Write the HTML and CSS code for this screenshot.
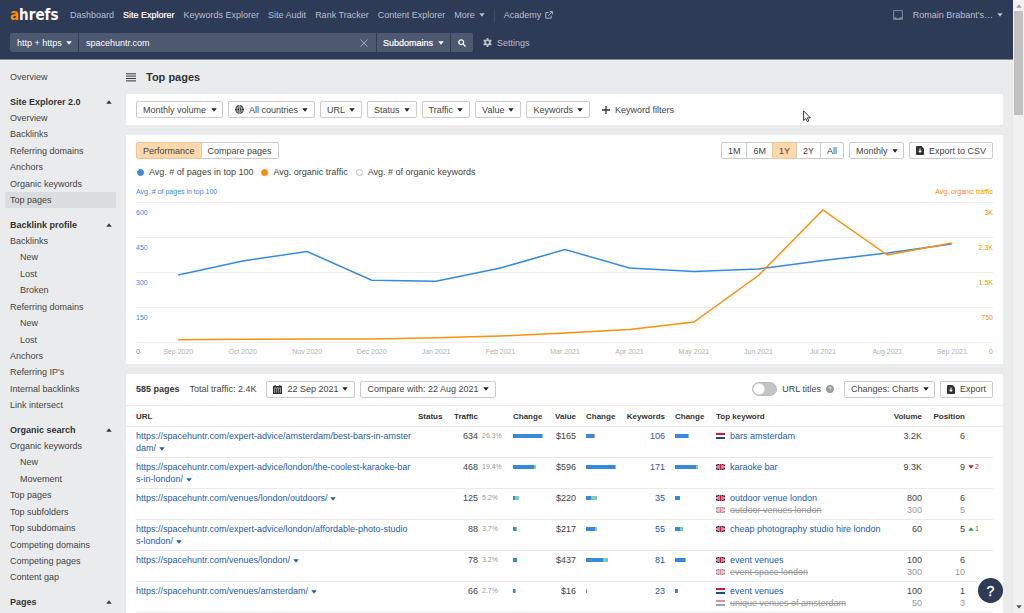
FILE: index.html
```html
<!DOCTYPE html>
<html lang="en">
<head>
<meta charset="utf-8">
<title>Top pages - Site Explorer</title>
<link rel="stylesheet" href="styles.css">
</head>
<body>
<svg class="defs" aria-hidden="true">
  <symbol id="caret" viewBox="0 0 6 4"><path d="M.3.3h5.4L3 3.8z" fill="currentColor"/></symbol>
  <symbol id="caret-up" viewBox="0 0 6 4"><path d="M.3 3.8h5.4L3 .3z" fill="currentColor"/></symbol>
  <symbol id="export" viewBox="0 0 8 9"><path d="M1 0h4.5L8 2.5V8a1 1 0 0 1-1 1H1a1 1 0 0 1-1-1V1a1 1 0 0 1 1-1z" fill="#333"/><path d="M3.5 2.6h1v2.2H6L4 7 2 4.8h1.500z" fill="#fff"/></symbol>
  <symbol id="nl" viewBox="0 0 9 6"><path fill="#fff" d="M0 0h9v6H0z"/><path fill="#c8202f" d="M0 0h9v2H0z"/><path fill="#21468b" d="M0 4h9v2H0z"/></symbol>
  <symbol id="gb" viewBox="0 0 9 6"><path fill="#0f1f6b" d="M0 0h9v6H0z"/><path d="M0 0l9 6M9 0L0 6" stroke="#fff" stroke-width=".8"/><path d="M0 0l9 6M9 0L0 6" stroke="#d0142c" stroke-width=".4"/><path d="M4.500 0v6M0 3h9" stroke="#fff" stroke-width="2"/><path d="M4.500 0v6M0 3h9" stroke="#d0142c" stroke-width="1.200"/></symbol>
</svg>

<div class="app">
<div class="page">
  <header class="header">
    <div class="topbar">
      <a class="logo" href="#"><span class="logo-a">a</span>hrefs</a>
      <nav class="mainnav" aria-label="Main">
        <a href="#">Dashboard</a>
        <a href="#" class="current">Site Explorer</a>
        <a href="#">Keywords Explorer</a>
        <a href="#">Site Audit</a>
        <a href="#">Rank Tracker</a>
        <a href="#">Content Explorer</a>
        <button type="button" class="navbtn">More <svg class="caret"><use href="#caret"/></svg></button>
        <span class="divider"></span>
        <a href="#" class="academy">Academy <svg width="8" height="8" viewBox="0 0 8 8" fill="none" stroke="currentColor" stroke-width=".9"><path d="M3.500 1.500H.8v5.700h5.400V4.500M4.600.6h2.800v2.800M7.200.8L3.200 4.800"/></svg></a>
      </nav>
      <div class="account">
        <svg width="10" height="10" viewBox="0 0 10 10"><path d="M.6.6h8.800v8.800H.6z" fill="none" stroke="#7f8899" stroke-width="1"/><path d="M.6 7.200H3.500v1h3v-1h2.900v2.200H.6z" fill="#7f8899"/></svg>
        <button type="button" class="navbtn">Romain Brabant's… <svg class="caret"><use href="#caret"/></svg></button>
      </div>
    </div>
    <form class="searchbar">
      <select class="dark protocol" aria-label="Protocol"><option>http + https</option></select>
      <div class="target">
        <input type="text" value="spacehuntr.com" aria-label="Target">
        <button type="button" class="clear" aria-label="Clear"><svg width="8" height="8" viewBox="0 0 8 8" stroke="#a0a7b3" stroke-width="1"><path d="M.5.5l7 7M7.500.5l-7 7"/></svg></button>
      </div>
      <select class="dark mode" aria-label="Mode"><option>Subdomains</option></select>
      <button type="button" class="go" aria-label="Search"><svg width="8" height="8" viewBox="0 0 8 8" fill="none" stroke="#fff" stroke-width="1.300"><circle cx="3.200" cy="3.200" r="2.400"/><path d="M5 5l2.500 2.500"/></svg></button>
      <button type="button" class="settings"><svg width="9" height="9" viewBox="0 0 10 10"><circle cx="5" cy="5" r="2.600" fill="none" stroke="currentColor" stroke-width="2"/><path d="M5 0v2M5 8v2M.7 2.500l1.700 1M7.600 6.500l1.700 1M.7 7.500l1.700-1M7.600 3.500l1.700-1" stroke="currentColor" stroke-width="2"/></svg>Settings</button>
    </form>
  </header>

  <div class="body">
    <nav class="sidebar" aria-label="Reports">
      <a href="#">Overview</a>
      <button type="button">Site Explorer 2.0 <svg class="caret"><use href="#caret-up"/></svg></button>
      <a href="#">Overview</a>
      <a href="#">Backlinks</a>
      <a href="#">Referring domains</a>
      <a href="#">Anchors</a>
      <a href="#">Organic keywords</a>
      <a href="#" class="selected">Top pages</a>
      <button type="button">Backlink profile <svg class="caret"><use href="#caret-up"/></svg></button>
      <a href="#">Backlinks</a>
      <a href="#" class="sub">New</a>
      <a href="#" class="sub">Lost</a>
      <a href="#" class="sub">Broken</a>
      <a href="#">Referring domains</a>
      <a href="#" class="sub">New</a>
      <a href="#" class="sub">Lost</a>
      <a href="#">Anchors</a>
      <a href="#">Referring IP's</a>
      <a href="#">Internal backlinks</a>
      <a href="#">Link intersect</a>
      <button type="button">Organic search <svg class="caret"><use href="#caret-up"/></svg></button>
      <a href="#">Organic keywords</a>
      <a href="#" class="sub">New</a>
      <a href="#" class="sub">Movement</a>
      <a href="#">Top pages</a>
      <a href="#">Top subfolders</a>
      <a href="#">Top subdomains</a>
      <a href="#">Competing domains</a>
      <a href="#">Competing pages</a>
      <a href="#">Content gap</a>
      <button type="button">Pages <svg class="caret"><use href="#caret-up"/></svg></button>
    </nav>

    <main class="main">
      <div class="title">
        <button type="button" class="burger" aria-label="Toggle menu"><svg width="10" height="9" viewBox="0 0 10 9" stroke="#333" stroke-width="1"><path d="M0 .8h10M0 3.100h10M0 5.500h10M0 7.900h10"/></svg></button>
        <h1>Top pages</h1>
      </div>

      <section class="panel filters" aria-label="Filters">
        <select class="btn" aria-label="Volume"><option>Monthly volume</option></select>
        <button type="button" class="btn"><svg class="icon" width="9" height="9" viewBox="0 0 9 9"><circle cx="4.500" cy="4.500" r="4.400" fill="#333"/><path d="M0 3h9M0 6h9M4.500 0v9M4.500.2C1.500 2.500 1.500 6.500 4.500 8.800M4.500.2c3 2.300 3 6.300 0 8.600" fill="none" stroke="#fff" stroke-width=".5"/></svg>All countries <svg class="caret"><use href="#caret"/></svg></button>
        <button type="button" class="btn">URL <svg class="caret"><use href="#caret"/></svg></button>
        <button type="button" class="btn">Status <svg class="caret"><use href="#caret"/></svg></button>
        <button type="button" class="btn">Traffic <svg class="caret"><use href="#caret"/></svg></button>
        <button type="button" class="btn">Value <svg class="caret"><use href="#caret"/></svg></button>
        <button type="button" class="btn">Keywords <svg class="caret"><use href="#caret"/></svg></button>
        <button type="button" class="btn plain"><svg class="icon" width="8" height="8" viewBox="0 0 8 8" stroke="#333" stroke-width="1.300"><path d="M4 0v8M0 4h8"/></svg>Keyword filters</button>
      </section>

      <section class="panel chart" aria-label="Performance chart">
        <div class="row">
          <div class="group">
            <button type="button" class="btn on">Performance</button>
            <button type="button" class="btn">Compare pages</button>
          </div>
          <div class="row-end">
            <div class="group">
              <button type="button" class="btn">1M</button>
              <button type="button" class="btn">6M</button>
              <button type="button" class="btn on">1Y</button>
              <button type="button" class="btn">2Y</button>
              <button type="button" class="btn">All</button>
            </div>
            <select class="btn" aria-label="Interval"><option>Monthly</option></select>
            <button type="button" class="btn"><svg class="icon" width="8" height="9"><use href="#export"/></svg>Export to CSV</button>
          </div>
        </div>
        <ul class="legend">
          <li><i class="dot blue"></i>Avg. # of pages in top 100</li>
          <li><i class="dot orange"></i>Avg. organic traffic</li>
          <li><i class="dot"></i>Avg. # of organic keywords</li>
        </ul>
        <div class="axis-titles"><span class="left">Avg. # of pages in top 100</span><span class="right">Avg. organic traffic</span></div>
        <div class="plot">
          <div class="tick"><span class="left">600</span><span class="right">3K</span></div>
          <div class="tick"><span class="left">450</span><span class="right">2.3K</span></div>
          <div class="tick"><span class="left">300</span><span class="right">1.5K</span></div>
          <div class="tick"><span class="left">150</span><span class="right">750</span></div>
          <svg class="lines" viewBox="0 0 13 140" preserveAspectRatio="none">
            <polyline stroke="#368ade" points=".5,73 1.500,59 2.500,49.500 3.500,78.300 4.500,79.200 5.500,66 6.500,47.500 7.500,66 8.500,69.500 9.500,67 10.500,58.500 11.500,51 12.500,42"/>
            <polyline stroke="#ff8f0f" points=".5,137.700 1.500,137.300 2.500,137 3.500,136.900 4.500,135.700 5.500,134 6.500,131 7.500,127.500 8.500,120 9.500,73.500 10.500,8 11.500,53 12.500,41"/>
          </svg>
          <div class="months">
            <span class="left">0</span>
            <ol><li>Sep 2020</li><li>Oct 2020</li><li>Nov 2020</li><li>Dec 2020</li><li>Jan 2021</li><li>Feb 2021</li><li>Mar 2021</li><li>Apr 2021</li><li>May 2021</li><li>Jun 2021</li><li>Jul 2021</li><li>Aug 2021</li><li>Sep 2021</li></ol>
            <span class="right">0</span>
          </div>
        </div>
      </section>

      <section class="panel pages" aria-label="Pages">
        <div class="row toolbar">
          <strong>585 pages</strong>
          <span>Total traffic: 2.4K</span>
          <div class="pickers">
            <button type="button" class="btn"><svg class="icon" width="9" height="9" viewBox="0 0 9 9"><path d="M0 1h1.500V0h1.200v1h3.600V0h1.200v1H9v8H0z" fill="#333"/><path d="M1.500 3.500v4.200M3.500 3.500v4.200M5.500 3.500v4.200M7.500 3.500v4.200M1 3h7" stroke="#fff" stroke-width=".5"/></svg>22 Sep 2021 <svg class="caret"><use href="#caret"/></svg></button>
            <button type="button" class="btn">Compare with: 22 Aug 2021 <svg class="caret"><use href="#caret"/></svg></button>
          </div>
          <div class="row-end">
            <label class="toggle"><input type="checkbox" role="switch">URL titles</label>
            <svg class="hint" width="8" height="8" viewBox="0 0 8 8"><circle cx="4" cy="4" r="3.900" fill="#999"/><path d="M2.800 3.200c0-1.600 2.400-1.500 2.400-.1 0 .9-1.200.8-1.200 1.700M4 5.600v.8" fill="none" stroke="#fff" stroke-width=".8"/></svg>
            <select class="btn" aria-label="Changes"><option>Changes: Charts</option></select>
            <button type="button" class="btn"><svg class="icon" width="8" height="9"><use href="#export"/></svg>Export</button>
          </div>
        </div>
        <table>
          <colgroup><col class="c-url"><col class="c-status"><col class="c-traffic"><col class="c-share"><col class="c-change1"><col class="c-value"><col class="c-change2"><col class="c-kw"><col class="c-change3"><col class="c-top"><col class="c-vol"><col class="c-pos"><col class="c-delta"></colgroup>
          <thead>
            <tr><th>URL</th><th>Status</th><th class="num">Traffic</th><td></td><th>Change</th><th class="num">Value</th><th class="pad">Change</th><th class="num">Keywords</th><th class="pad">Change</th><th>Top keyword</th><th class="num">Volume</th><th class="num">Position</th><td></td></tr>
          </thead>
          <tbody>
            <tr>
              <td><a href="#">https://spacehuntr.com/expert-advice/amsterdam/best-bars-in-amster<br>dam/ <svg class="caret"><use href="#caret"/></svg></a></td><td></td>
              <td class="num">634</td><td class="share">26.3%</td>
              <td><span class="bar"><i style="width:29px"></i><i class="up" style="width:1px"></i></span></td>
              <td class="num">$165</td>
              <td class="pad"><span class="bar"><i style="width:8px"></i><i class="down" style="width:1px"></i></span></td>
              <td class="num"><a href="#">106</a></td>
              <td class="pad"><span class="bar"><i style="width:13px"></i><i class="up" style="width:1px"></i></span></td>
              <td><div class="kw"><svg><use href="#nl"/></svg><a href="#">bars amsterdam</a></div></td>
              <td class="num">3.2K</td><td class="num">6</td><td></td>
            </tr>
            <tr>
              <td><a href="#">https://spacehuntr.com/expert-advice/london/the-coolest-karaoke-bar<br>s-in-london/ <svg class="caret"><use href="#caret"/></svg></a></td><td></td>
              <td class="num">468</td><td class="share">19.4%</td>
              <td><span class="bar"><i style="width:21px"></i><i class="up" style="width:2px"></i></span></td>
              <td class="num">$596</td>
              <td class="pad"><span class="bar"><i style="width:29px"></i><i class="up" style="width:1px"></i></span></td>
              <td class="num"><a href="#">171</a></td>
              <td class="pad"><span class="bar"><i style="width:21px"></i><i class="up" style="width:2px"></i></span></td>
              <td><div class="kw"><svg><use href="#gb"/></svg><a href="#">karaoke bar</a></div></td>
              <td class="num">9.3K</td><td class="num">9</td><td class="delta worse"><svg class="caret"><use href="#caret"/></svg>2</td>
            </tr>
            <tr>
              <td><a href="#">https://spacehuntr.com/venues/london/outdoors/ <svg class="caret"><use href="#caret"/></svg></a></td><td></td>
              <td class="num">125</td><td class="share">5.2%</td>
              <td><span class="bar"><i style="width:2px"></i><i class="up" style="width:4px"></i></span></td>
              <td class="num">$220</td>
              <td class="pad"><span class="bar"><i style="width:5px"></i><i class="up" style="width:6px"></i></span></td>
              <td class="num"><a href="#">35</a></td>
              <td class="pad"><span class="bar"><i style="width:5px"></i></span></td>
              <td><div class="kw"><svg><use href="#gb"/></svg><a href="#">outdoor venue london</a></div><div class="kw old"><svg><use href="#gb"/></svg><s>outdoor venues london</s></div></td>
              <td class="num">800<div class="old">300</div></td><td class="num">6<div class="old">5</div></td><td></td>
            </tr>
            <tr>
              <td><a href="#">https://spacehuntr.com/expert-advice/london/affordable-photo-studio<br>s-london/ <svg class="caret"><use href="#caret"/></svg></a></td><td></td>
              <td class="num">88</td><td class="share">3.7%</td>
              <td><span class="bar"><i style="width:3px"></i><i class="up" style="width:1px"></i></span></td>
              <td class="num">$217</td>
              <td class="pad"><span class="bar"><i style="width:9px"></i><i class="up" style="width:2px"></i></span></td>
              <td class="num"><a href="#">55</a></td>
              <td class="pad"><span class="bar"><i style="width:5px"></i><i class="up" style="width:3px"></i></span></td>
              <td><div class="kw"><svg><use href="#gb"/></svg><a href="#">cheap photography studio hire london</a></div></td>
              <td class="num">60</td><td class="num">5</td><td class="delta better"><svg class="caret"><use href="#caret-up"/></svg>1</td>
            </tr>
            <tr>
              <td><a href="#">https://spacehuntr.com/venues/london/ <svg class="caret"><use href="#caret"/></svg></a></td><td></td>
              <td class="num">78</td><td class="share">3.2%</td>
              <td><span class="bar"><i style="width:4px"></i></span></td>
              <td class="num">$437</td>
              <td class="pad"><span class="bar"><i style="width:17px"></i><i class="up" style="width:5px"></i></span></td>
              <td class="num"><a href="#">81</a></td>
              <td class="pad"><span class="bar"><i style="width:10px"></i><i class="up" style="width:1px"></i></span></td>
              <td><div class="kw"><svg><use href="#gb"/></svg><a href="#">event venues</a></div><div class="kw old"><svg><use href="#gb"/></svg><s>event space london</s></div></td>
              <td class="num">100<div class="old">300</div></td><td class="num">6<div class="old">10</div></td><td></td>
            </tr>
            <tr>
              <td><a href="#">https://spacehuntr.com/venues/amsterdam/ <svg class="caret"><use href="#caret"/></svg></a></td><td></td>
              <td class="num">66</td><td class="share">2.7%</td>
              <td><span class="bar"><i style="width:2px"></i><i class="up" style="width:1px"></i></span></td>
              <td class="num">$16</td>
              <td class="pad"><span class="bar"><i class="flat" style="width:1px"></i></span></td>
              <td class="num"><a href="#">23</a></td>
              <td class="pad"><span class="bar"><i style="width:3px"></i></span></td>
              <td><div class="kw"><svg><use href="#nl"/></svg><a href="#">event venues</a></div><div class="kw old"><svg><use href="#nl"/></svg><s>unique venues of amsterdam</s></div></td>
              <td class="num">100<div class="old">50</div></td><td class="num">1<div class="old">3</div></td><td></td>
            </tr>
          </tbody>
        </table>
      </section>
    </main>
  </div>
</div>
<div class="scrollbar" aria-hidden="true">
  <svg class="caret"><use href="#caret-up"/></svg>
  <div class="thumb"></div>
  <svg class="caret end"><use href="#caret"/></svg>
</div>
</div>

<button type="button" class="help" aria-label="Help">?</button>
<svg class="cursor" width="9" height="13" viewBox="0 0 9 13" aria-hidden="true"><path d="M.6.8v9.700l2.200-2 1.500 3.200 1.500-.7-1.400-3.100h3z" fill="#fff" stroke="#222" stroke-width=".9"/></svg>
</body>
</html>
```
FILE: styles.css
```css
* { box-sizing: border-box; }
body {
  margin: 0;
  height: 100vh;
  overflow: hidden;
  background: #e9ebed;
  color: #444;
  font: 9px/12px "Liberation Sans", Arial, sans-serif;
}
button, input, select { font: inherit; color: inherit; margin: 0; }
button { background: none; border: 0; padding: 0; cursor: pointer; }
a { text-decoration: none; color: inherit; }
svg { flex: none; }
.defs { position: absolute; width: 0; height: 0; }
.caret { width: 6px; height: 4px; }

.app { display: flex; height: 100vh; }
.page { flex: 1; min-width: 0; display: flex; flex-direction: column; }

/* Header */
.header { background: #2d3b56; color: #b9bfca; border-bottom: 1px solid #7d879a; padding: 0 10px 7px; }
.topbar { display: flex; align-items: center; height: 33px; padding-bottom: 3px; }
.logo {
  width: 60px;
  color: #fff;
  font: bold 15px/18px "DejaVu Sans Condensed", "DejaVu Sans", sans-serif;
}
.logo-a { color: #ff8b00; }
.mainnav { display: flex; align-items: center; gap: 9px; }
.mainnav .current { color: #fff; -webkit-text-stroke: 0.2px #fff; }
.navbtn { display: flex; align-items: center; gap: 4px; }
.divider { width: 1px; height: 13px; background: #3f4c65; }
.academy { display: flex; align-items: center; gap: 4px; }
.account { margin-left: auto; display: flex; align-items: center; gap: 10px; }
.searchbar { display: flex; gap: 1px; height: 19px; }
.dark, .target, .go { background-color: #4d5970; color: #fff; border: 0; }
.dark {
  appearance: none;
  padding: 0 16px 0 6px;
  background-image: url("data:image/svg+xml,%3Csvg xmlns='http://www.w3.org/2000/svg' viewBox='0 0 6 4'%3E%3Cpath d='M.3.3h5.4L3 3.8z' fill='%23fff'/%3E%3C/svg%3E");
  background-repeat: no-repeat;
  background-size: 6px 4px;
  background-position: right 6px center;
}
.protocol { border-radius: 2px 0 0 2px; padding-left: 7px; }
.mode { -webkit-text-stroke: 0.2px #fff; }
.target { display: flex; width: 297px; padding: 0 8px 0 7px; }
.target input { flex: 1; min-width: 0; background: none; border: 0; padding: 0; outline: 0; }
.clear, .go { display: flex; align-items: center; justify-content: center; }
.go { width: 22px; border-radius: 0 2px 2px 0; }
.settings { display: flex; align-items: center; gap: 5px; margin-left: 9px; }

/* Sidebar */
.body { flex: 1; display: flex; min-height: 0; }
.sidebar { width: 126px; flex: none; display: flex; flex-direction: column; padding: 9px 10px 3px 5px; }
.sidebar > * { flex: 1 1 0; min-height: 16px; display: flex; align-items: center; padding-left: 5px; }
.sidebar .sub { padding-left: 15px; }
.sidebar .selected { background: #d9dde0; border-radius: 2px; }
.sidebar button { justify-content: space-between; margin-top: 8px; padding-right: 4px; font-weight: bold; color: #333; }

/* Main column */
.main { flex: 1; min-width: 0; padding-right: 10px; }
.title { display: flex; align-items: center; gap: 10px; height: 34px; }
.title h1 { margin: 0; font-size: 11px; line-height: 14px; color: #333; }
.burger { display: flex; }
.panel { background: #fff; margin-bottom: 10px; padding: 7px 10px; }
.filters { display: flex; gap: 5px; }
.btn {
  display: flex;
  align-items: center;
  gap: 4px;
  height: 17px;
  padding: 0 6px;
  background-color: #fff;
  border: 1px solid #ccc;
  border-radius: 2px;
  white-space: nowrap;
}
.btn .caret { color: #222; }
.btn .icon { margin-right: 1px; }
select.btn {
  appearance: none;
  padding-right: 15px;
  background-image: url("data:image/svg+xml,%3Csvg xmlns='http://www.w3.org/2000/svg' viewBox='0 0 6 4'%3E%3Cpath d='M.3.3h5.4L3 3.8z' fill='%23222'/%3E%3C/svg%3E");
  background-repeat: no-repeat;
  background-size: 6px 4px;
  background-position: right 5px center;
}
.btn.plain { border-color: transparent; }
.group { display: flex; }
.group .btn + .btn { margin-left: -1px; }
.group .btn:not(:last-child) { border-top-right-radius: 0; border-bottom-right-radius: 0; }
.group .btn:not(:first-child) { border-top-left-radius: 0; border-bottom-left-radius: 0; }
.btn.on { background-color: #ffd8ab; border-color: #edc698; }
.row { display: flex; align-items: center; }
.row-end { margin-left: auto; display: flex; align-items: center; gap: 5px; }

/* Chart */
.chart { padding-bottom: 0; }
.legend { display: flex; gap: 7px; margin: 6px 0 0; padding: 0; list-style: none; line-height: 14px; }
.legend li { display: flex; align-items: center; gap: 4px; }
.dot { width: 7px; height: 7px; margin: 0 1px; border: 1px solid #bbb; border-radius: 50%; }
.dot.blue { background: #368ade; border-color: #368ade; }
.dot.orange { background: #ff8b00; border-color: #ff8b00; }
.left { color: #368ade; }
.right { color: #ff8b00; }
.axis-titles, .tick { display: flex; justify-content: space-between; font-size: 7px; }
.axis-titles { margin: 7px 0 4px; }
.plot { position: relative; }
.tick { height: 35px; border-top: 1px solid #eee; padding-top: 4px; }
.lines { position: absolute; top: 0; left: 10px; width: calc(100% - 19px); height: 140px; }
.lines polyline { fill: none; stroke-width: 1.5px; vector-effect: non-scaling-stroke; }
.months {
  display: grid;
  grid-template-columns: 10px 1fr 9px;
  height: 22px;
  padding-top: 3px;
  border-top: 1px solid #eee;
  font-size: 7px;
}
.months ol { display: flex; margin: 0; padding: 0; list-style: none; color: #b0b0b0; }
.months li { flex: 1; text-align: center; }
.months .right { text-align: right; }

/* Pages table */
.pages { padding: 0; margin: 0; }
.toolbar { height: 32px; padding: 0 10px 1px; gap: 10px; border-bottom: 1px solid #eee; }
.toolbar strong { color: #333; }
.pickers { display: flex; gap: 5px; }
.toggle { display: flex; align-items: center; gap: 5px; }
.toggle input {
  appearance: none;
  width: 25px;
  height: 14px;
  border: 1px solid #bbb;
  border-radius: 7px;
  background: radial-gradient(circle at 6px 6px, #fff 5px, #c4c4c4 6px);
}
.hint { margin-right: 5px; }
table { width: 100%; border-collapse: collapse; table-layout: fixed; white-space: nowrap; }
.c-url { width: 292px; }
.c-status { width: 35px; }
.c-traffic { width: 25px; }
.c-share { width: 35px; }
.c-change1 { width: 36px; }
.c-value { width: 27px; }
.c-change2 { width: 45px; }
.c-kw { width: 44px; }
.c-change3 { width: 51px; }
.c-vol { width: 42px; }
.c-pos { width: 43px; }
.c-delta { width: 38px; }
th, td { padding: 0; text-align: left; vertical-align: top; }
tr > :first-child { padding-left: 10px; }
tr { background: linear-gradient(#eaeaea, #eaeaea) center bottom / calc(100% - 20px) 1px no-repeat; }
thead tr { height: 21px; color: #333; background-size: 100% 1px; }
th { vertical-align: middle; font-size: 8px; }
tbody tr { height: 31px; }
tbody td { padding-top: 3px; }
tbody a { color: #1b5cb3; }
.num { text-align: right; }
.pad { padding-left: 10px; }
.share { padding-left: 4px; font-size: 7px; color: #999; }
.bar { display: flex; align-items: center; height: 12px; }
.bar i { height: 4px; background: #368ade; }
.bar .up { background: #82cfa4; }
.bar .down { background: #e08a9a; }
.bar .flat { background: #9a7fb8; }
.kw { display: flex; align-items: center; gap: 5px; }
.kw svg { width: 9px; height: 6px; }
.old { color: #999; }
.old svg { opacity: 0.5; }
td.delta { padding-left: 3px; font-size: 7px; }
.delta .caret { margin-right: 1px; }
.worse { color: #d0141e; }
.better { color: #1a9850; }

/* Scrollbar */
.scrollbar { width: 11px; flex: none; display: flex; flex-direction: column; align-items: center; background: #f1f1f1; padding: 4px 0; color: #999; }
.thumb { width: 9px; height: 104px; margin-top: 3px; background: #c1c1c1; }
.end { margin-top: auto; color: #555; }

.help {
  position: fixed;
  right: 21px;
  bottom: 10px;
  width: 25px;
  height: 25px;
  border-radius: 50%;
  background: #2d3b56;
  color: #fff;
  font-size: 14px;
  -webkit-text-stroke: 0.3px #fff;
}
.cursor { position: fixed; left: 803px; top: 110px; }
```
